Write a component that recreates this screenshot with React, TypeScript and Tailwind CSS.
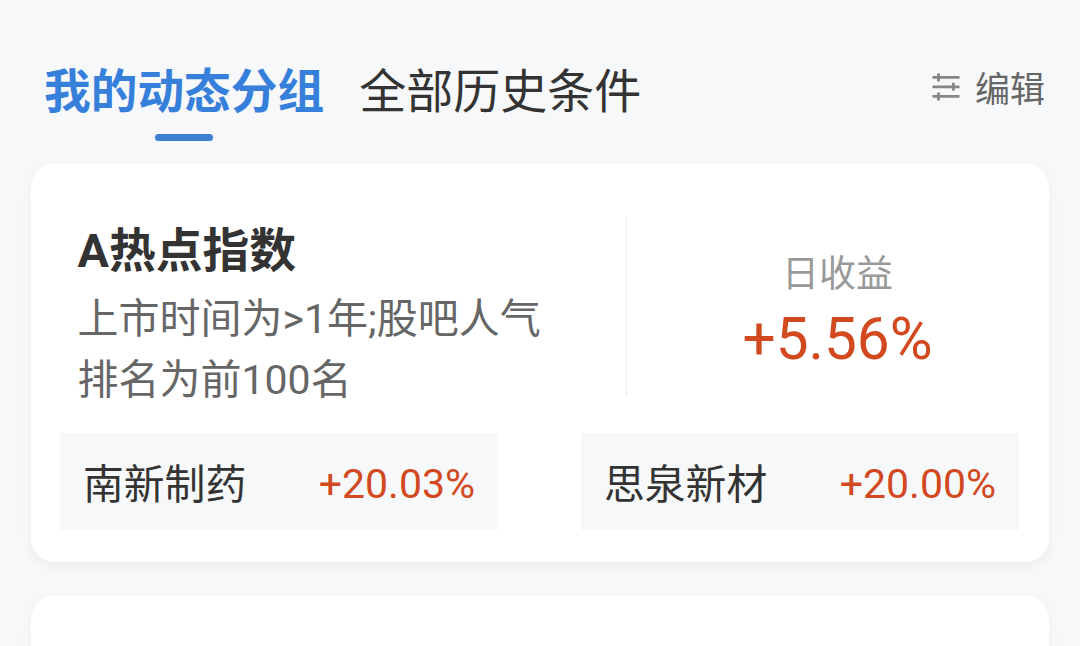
interface Stock {
    name: string;
    change: string;
}

const stocks: Stock[] = [
    { name: "南新制药", change: "+20.03%" },
    { name: "思泉新材", change: "+20.00%" },
];

function EditIcon() {
    return (
        <svg width="28" height="28" viewBox="0 0 28 28" fill="none" stroke="#858688" strokeWidth="2.8">
            <path d="M.5 4.4h27M.5 13.8h27M.5 23.4h27" />
            <path d="M6.5.4v8M21.3 9.8v8M6.5 19.4v8" />
        </svg>
    );
}

function Header() {
    return (
        <header className="flex h-[164px] items-start pr-[35px] pl-[44px] pt-[57px]">
            <div className="flex flex-col items-center">
                <h1 className="text-[46.7px] leading-[70px] font-bold whitespace-nowrap text-[#3680dc]">我的动态分组</h1>
                <div className="mt-[7px] h-[6.5px] w-[58px] rounded-full bg-[#3d80d3]" />
            </div>
            <span className="ml-[35px] text-[47px] leading-[70px] whitespace-nowrap text-[#333]">全部历史条件</span>
            <button className="ml-auto flex items-start gap-[15px] text-[35px] leading-[68px] text-[#666]">
                <span className="pt-[16px]">
                    <EditIcon />
                </span>
                编辑
            </button>
        </header>
    );
}

function StockTile({ name, change }: Stock) {
    return (
        <div className="flex h-[97px] w-[438px] justify-between bg-[#f7f8fa] px-[23px] leading-[97px]">
            <span className="pt-[4px] text-[40.8px] text-[#333]">{name}</span>
            <span className="pt-[3px] text-[41px] text-[#d2491f]">{change}</span>
        </div>
    );
}

function GroupCard() {
    return (
        <section className="mx-[31px] flex h-[398px] flex-col rounded-[24px] bg-white px-[29px] pt-[52px] shadow-[0_4px_14px_rgba(0,0,0,0.05)]">
            <div className="flex h-[180px]">
                <div className="w-[567px] border-r border-[#ebebeb] pl-[17.5px]">
                    <h2 className="pt-[1px] text-[46.8px] leading-[68px] font-bold text-[#333]">A热点指数</h2>
                    <p className="mt-[4px] text-[41px] leading-[61px] whitespace-nowrap text-[#666]">
                        上市时间为&gt;1年;股吧人气
                        <br />
                        排名为前100名
                    </p>
                </div>
                <div className="flex flex-1 flex-col items-center pt-[31px] pl-[28px]">
                    <span className="text-[37px] leading-[56px] text-[#999]">日收益</span>
                    <span className="-mt-[2px] text-[58.5px] leading-[76px] text-[#d2491f]">+5.56%</span>
                </div>
            </div>
            <div className="mt-[37px] flex gap-[83px]">
                {stocks.map((stock) => (
                    <StockTile key={stock.name} {...stock} />
                ))}
            </div>
        </section>
    );
}

export default function App() {
    return (
        <main className="h-[646px] overflow-hidden bg-[#f7f8fa] font-[Roboto,'Noto_Sans_CJK_SC',sans-serif]">
            <Header />
            <GroupCard />
            <section className="mx-[31px] mt-[34px] h-[398px] rounded-[24px] bg-white shadow-[0_4px_14px_rgba(0,0,0,0.05)]" />
        </main>
    );
}
